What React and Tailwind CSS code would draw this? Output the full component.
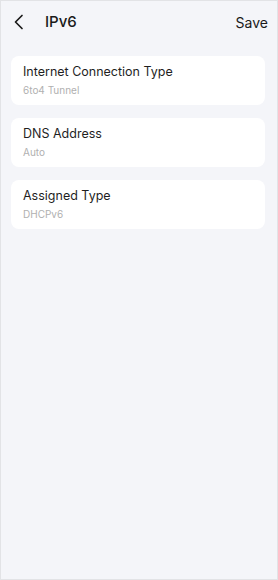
import React from 'react';

const items = [
  { title: 'Internet Connection Type', value: '6to4 Tunnel' },
  { title: 'DNS Address', value: 'Auto' },
  { title: 'Assigned Type', value: 'DHCPv6' },
];

function App() {
  return (
    <div
      className="w-[278px] h-[580px] border border-[#e2e3e6] bg-[#f4f5f9] flex flex-col"
      style={{ fontFamily: 'Inter, "Noto Sans", sans-serif' }}
    >
      <div className="h-[42px] flex items-center pl-[12px] pr-[9px]">
        <svg width="12" height="16" viewBox="0 0 12 16" fill="none" className="mt-[-1px]">
          <path d="M9 1.5L2.5 8L9 14.5" stroke="#1a1a1a" strokeWidth="1.7" strokeLinecap="round" strokeLinejoin="round" />
        </svg>
        <span className="ml-[20px] text-[15px] font-medium text-[#1a1a1a]">IPv6</span>
        <span className="ml-auto text-[14px] text-[#1a1a1a]">Save</span>
      </div>

      <div className="flex flex-col gap-[13px] pl-[10px] pr-[12px] pt-[13px]">
        {items.map((it) => (
          <div key={it.title} className="bg-white rounded-[8px] h-[49px] pl-[12px] flex flex-col justify-center">
            <div className="text-[12.5px] leading-[16px] text-[#1f1f1f]">{it.title}</div>
            <div className="text-[10px] leading-[14px] mt-[3px] text-[#b0b0b0]">{it.value}</div>
          </div>
        ))}
      </div>
    </div>
  );
}

export default App;
